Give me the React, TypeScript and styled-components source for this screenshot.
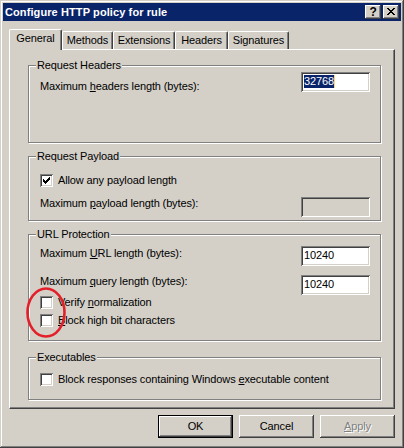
import React from "react";
import styled, { createGlobalStyle } from "styled-components";

// classic window colours
const FACE = "#D4D0C8";
const SHADOW = "#808080";
const DARK = "#404040";
const LIGHT = "#FFFFFF";
const CAPTION = "#0A246A";

const GlobalStyle = createGlobalStyle`
  html, body {
    margin: 0;
    padding: 0;
    background: ${FACE};
  }
  body {
    font-family: "Liberation Sans", Arial, sans-serif;
    font-size: 11px;
    letter-spacing: -0.12px;
    color: #000;
  }
  * {
    box-sizing: border-box;
  }
`;

const Window = styled.div`
  width: 404px;
  height: 448px;
  padding: 3px;
  background: ${FACE};
  box-shadow: inset -1px -1px ${DARK}, inset 1px 1px ${FACE},
    inset -2px -2px ${SHADOW}, inset 2px 2px ${LIGHT};
  display: flex;
  flex-direction: column;
`;

const TitleBar = styled.div`
  height: 18px;
  background: ${CAPTION};
  display: flex;
  align-items: center;
  padding: 0 2px;
`;

const TitleText = styled.div`
  flex: 1;
  color: #fff;
  font-weight: bold;
  font-size: 11px;
  letter-spacing: 0.1px;
  line-height: 13px;
`;

const CaptionButtons = styled.div`
  display: flex;
  gap: 2px;
`;

const CaptionButton = styled.div`
  width: 16px;
  height: 14px;
  background: ${FACE};
  box-shadow: inset -1px -1px ${DARK}, inset 1px 1px ${LIGHT},
    inset -2px -2px ${SHADOW};
  display: flex;
  align-items: center;
  justify-content: center;
  font-weight: bold;
  font-size: 12px;
  line-height: 12px;
  padding-bottom: 1px;
`;

const Body = styled.div`
  flex: 1;
  display: flex;
  flex-direction: column;
  padding: 8px 6px 0 6px;
`;

const TabStrip = styled.div`
  height: 20px;
  display: flex;
  align-items: flex-start;
  padding-left: 2px;
  position: relative;
  z-index: 1;
`;

const Tab = styled.div<{ $active?: boolean; $w: number }>`
  width: ${({ $w, $active }) => ($active ? $w + 2 : $w)}px;
  height: ${({ $active }) => ($active ? 21 : 18)}px;
  margin-top: ${({ $active }) => ($active ? 0 : 2)}px;
  margin-left: ${({ $active }) => ($active ? -2 : 0)}px;
  background: ${FACE};
  border-left: 1px solid ${LIGHT};
  border-top: 1px solid ${LIGHT};
  border-right: 1px solid ${DARK};
  border-radius: 2px 2px 0 0;
  box-shadow: inset -1px 0 ${SHADOW};
  text-align: center;
  line-height: 13px;
  padding-top: 2px;
  white-space: nowrap;
`;

const Panel = styled.div`
  height: 360px;
  border: 1px solid;
  border-color: ${LIGHT} ${DARK} ${DARK} ${LIGHT};
  box-shadow: inset -1px -1px ${SHADOW};
  display: flex;
  flex-direction: column;
  padding: 0 13px 0 18px;
`;

const Group = styled.div<{ $h: number; $mt: number }>`
  position: relative;
  height: ${({ $h }) => $h}px;
  margin-top: ${({ $mt }) => $mt}px;
  border: 1px solid ${SHADOW};
  box-shadow: inset 1px 1px ${LIGHT}, 1px 1px ${LIGHT};
  padding: 0 10px 0 11px;
  display: flex;
  flex-direction: column;
`;

const Legend = styled.div`
  position: absolute;
  top: -7px;
  left: 7px;
  padding: 0 1px;
  background: ${FACE};
  line-height: 13px;
`;

const FieldRow = styled.div<{ $mt: number }>`
  display: flex;
  justify-content: space-between;
  align-items: flex-start;
  margin-top: ${({ $mt }) => $mt}px;
`;

const FieldLabel = styled.div<{ $off: number }>`
  line-height: 13px;
  margin-top: ${({ $off }) => $off}px;
`;

const TextBox = styled.div<{ $disabled?: boolean }>`
  width: 69px;
  height: 20px;
  background: ${({ $disabled }) => ($disabled ? FACE : LIGHT)};
  box-shadow: inset 1px 1px ${SHADOW}, inset -1px -1px ${LIGHT},
    inset 2px 2px ${DARK}, inset -2px -2px ${FACE};
  padding: 3px 3px 0 3px;
  display: flex;
  align-items: flex-start;
  line-height: 13px;
`;

const Selected = styled.span`
  background: ${CAPTION};
  color: #fff;
  line-height: 13px;
`;

const Caret = styled.span`
  width: 1px;
  height: 13px;
  background: #f5d58a;
`;

const CheckRow = styled.div<{ $mt: number }>`
  display: flex;
  align-items: center;
  gap: 5px;
  height: 13px;
  margin-top: ${({ $mt }) => $mt}px;
  line-height: 13px;
  white-space: nowrap;
`;

const CheckBox = styled.div`
  width: 13px;
  height: 13px;
  flex: none;
  background: ${LIGHT};
  box-shadow: inset 1px 1px ${SHADOW}, inset -1px -1px ${LIGHT},
    inset 2px 2px ${DARK}, inset -2px -2px ${FACE};
  display: flex;
  align-items: center;
  justify-content: center;
`;

const Key = styled.span`
  text-decoration: underline;
  text-underline-offset: 1px;
`;

const Annotation = styled.svg`
  position: absolute;
  left: -3px;
  top: 52px;
  pointer-events: none;
`;

const ButtonRow = styled.div`
  display: flex;
  justify-content: flex-end;
  gap: 6px;
  margin-top: 6px;
`;

const Button = styled.div<{ $default?: boolean; $disabled?: boolean }>`
  width: 75px;
  height: 23px;
  background: ${FACE};
  display: flex;
  align-items: center;
  justify-content: center;
  line-height: 13px;
  border: ${({ $default }) => ($default ? "1px solid #000" : "none")};
  box-shadow: ${({ $default }) =>
    $default
      ? `inset -1px -1px ${DARK}, inset 1px 1px ${LIGHT}, inset -2px -2px ${SHADOW}`
      : `inset -1px -1px ${DARK}, inset 1px 1px ${LIGHT}, inset -2px -2px ${SHADOW}, inset 2px 2px ${FACE}`};
  color: ${({ $disabled }) => ($disabled ? SHADOW : "#000")};
  text-shadow: ${({ $disabled }) => ($disabled ? `1px 1px ${LIGHT}` : "none")};
`;

const CloseGlyph = () => (
  <svg width="8" height="7" viewBox="0 0 8 7" shapeRendering="crispEdges">
    <path
      fill="#000"
      d="M0 0h2v1H0zM6 0h2v1H6zM1 1h2v1H1zM5 1h2v1H5zM2 2h4v1H2zM3 3h2v1H3zM2 4h4v1H2zM1 5h2v1H1zM5 5h2v1H5zM0 6h2v1H0zM6 6h2v1H6z"
    />
  </svg>
);

const CheckMark = () => (
  <svg width="7" height="7" viewBox="0 0 7 7" shapeRendering="crispEdges">
    <path
      fill="#000"
      d="M6 0h1v1H6zM5 1h2v1H5zM0 2h1v1H0zM4 2h3v1H4zM0 3h2v1H0zM3 3h3v1H3zM0 4h5v1H0zM1 5h3v1H1zM2 6h1v1H2z"
    />
  </svg>
);

const tabs = [
  { label: "General", w: 51 },
  { label: "Methods", w: 51 },
  { label: "Extensions", w: 62 },
  { label: "Headers", w: 53 },
  { label: "Signatures", w: 61 },
];

const App: React.FC = () => {
  return (
    <>
      <GlobalStyle />
      <Window>
        <TitleBar>
          <TitleText>Configure HTTP policy for rule</TitleText>
          <CaptionButtons>
            <CaptionButton>?</CaptionButton>
            <CaptionButton>
              <CloseGlyph />
            </CaptionButton>
          </CaptionButtons>
        </TitleBar>
        <Body>
          <TabStrip>
            {tabs.map((t, i) => (
              <Tab key={t.label} $w={t.w} $active={i === 0}>
                {t.label}
              </Tab>
            ))}
          </TabStrip>
          <Panel>
            <Group $h={78} $mt={15}>
              <Legend>Request Headers</Legend>
              <FieldRow $mt={6}>
                <FieldLabel $off={8}>
                  Maximum <Key>h</Key>eaders length (bytes):
                </FieldLabel>
                <TextBox>
                  <Selected>32768</Selected>
                  <Caret />
                </TextBox>
              </FieldRow>
            </Group>

            <Group $h={65} $mt={13}>
              <Legend>Request Payload</Legend>
              <CheckRow $mt={17}>
                <CheckBox>
                  <CheckMark />
                </CheckBox>
                Allow any payload length
              </CheckRow>
              <FieldRow $mt={10}>
                <FieldLabel $off={0}>
                  Maximum <Key>p</Key>ayload length (bytes):
                </FieldLabel>
                <TextBox $disabled />
              </FieldRow>
            </Group>

            <Group $h={107} $mt={13}>
              <Legend>URL Protection</Legend>
              <FieldRow $mt={11}>
                <FieldLabel $off={1}>
                  Maximum <Key>U</Key>RL length (bytes):
                </FieldLabel>
                <TextBox>10240</TextBox>
              </FieldRow>
              <FieldRow $mt={9}>
                <FieldLabel $off={0}>
                  Maximum <Key>q</Key>uery length (bytes):
                </FieldLabel>
                <TextBox>10240</TextBox>
              </FieldRow>
              <CheckRow $mt={1}>
                <CheckBox />
                <span>
                  Verify <Key>n</Key>ormalization
                </span>
              </CheckRow>
              <CheckRow $mt={5}>
                <CheckBox />
                <span>
                  <Key>B</Key>lock high bit characters
                </span>
              </CheckRow>
              <Annotation width="40" height="51" viewBox="0 0 40 51">
                <ellipse
                  cx="20"
                  cy="25.5"
                  rx="18.5"
                  ry="24"
                  fill="none"
                  stroke="#E3202A"
                  strokeWidth="2.6"
                />
              </Annotation>
            </Group>

            <Group $h={43} $mt={16}>
              <Legend>Executables</Legend>
              <CheckRow $mt={15}>
                <CheckBox />
                <span>
                  Block responses containing Windows <Key>e</Key>xecutable content
                </span>
              </CheckRow>
            </Group>
          </Panel>
          <ButtonRow>
            <Button $default>OK</Button>
            <Button>Cancel</Button>
            <Button $disabled>
              <span>
                <Key>A</Key>pply
              </span>
            </Button>
          </ButtonRow>
        </Body>
      </Window>
    </>
  );
};

export default App;
